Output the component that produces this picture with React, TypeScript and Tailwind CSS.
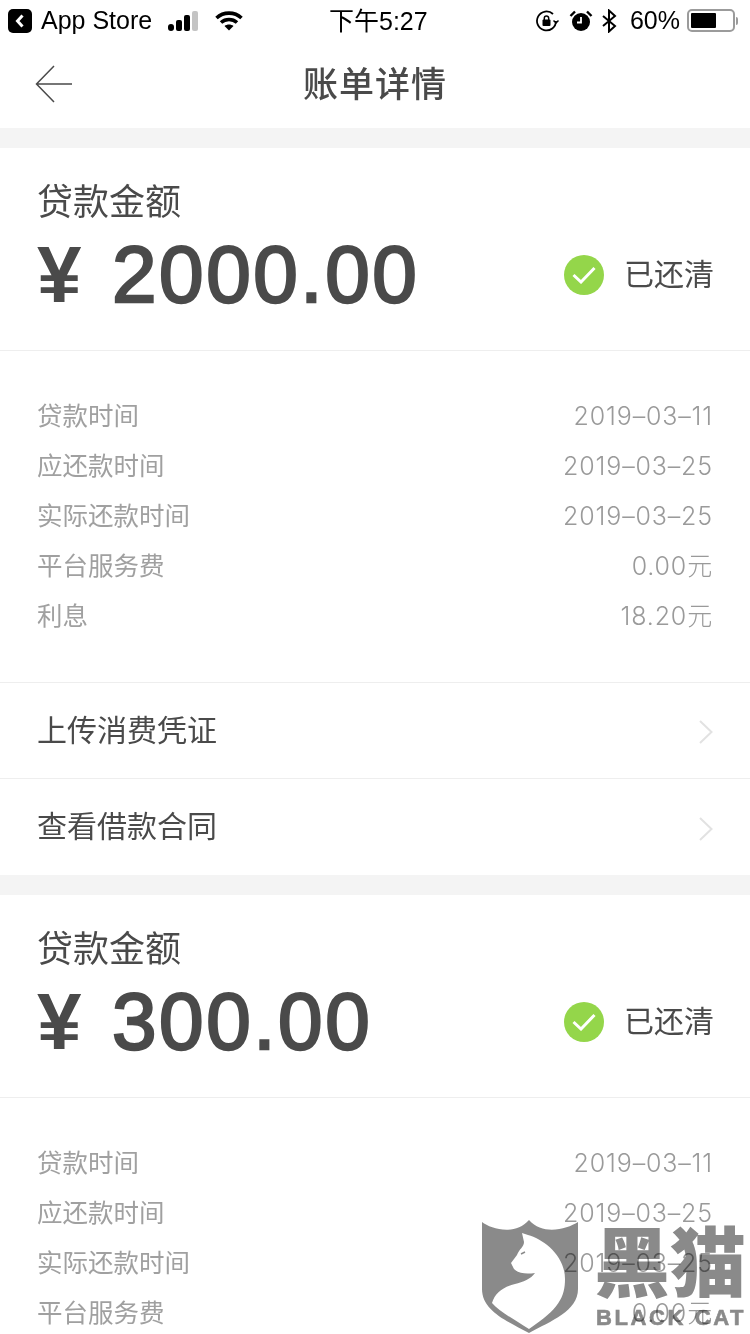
const fontStack = "font-['Liberation_Sans','Noto_Sans_CJK_SC',sans-serif]";

type Bill = {
  amount: string;
  rows: [string, string][];
};

const bills: Bill[] = [
  {
    amount: "2000.00",
    rows: [
      ["贷款时间", "2019–03–11"],
      ["应还款时间", "2019–03–25"],
      ["实际还款时间", "2019–03–25"],
      ["平台服务费", "0.00元"],
      ["利息", "18.20元"],
    ],
  },
  {
    amount: "300.00",
    rows: [
      ["贷款时间", "2019–03–11"],
      ["应还款时间", "2019–03–25"],
      ["实际还款时间", "2019–03–25"],
      ["平台服务费", "0.00元"],
    ],
  },
];

function StatusBar() {
  return (
    <div className="relative flex h-[40px] items-center justify-between pl-2 pr-[12px] pt-[1px] text-[25px] leading-none text-black">
      <div className="flex items-center">
        <div className="flex h-[24px] w-[24px] items-center justify-center rounded-[5px] bg-black">
          <svg viewBox="0 0 24 24" className="h-[24px] w-[24px]">
            <path d="M14.5 6.5 9.5 12l5 5.5" fill="none" stroke="#fff" strokeWidth="3" />
          </svg>
        </div>
        <span className="ml-[9px] text-[25px]">App Store</span>
        <div className="ml-[16px] flex items-end gap-[2px]">
          <div className="h-[7px] w-[6px] rounded-[3px] bg-black" />
          <div className="h-[11px] w-[6px] rounded-[2px] bg-black" />
          <div className="h-[16px] w-[6px] rounded-[2px] bg-black" />
          <div className="h-[20px] w-[6px] rounded-[2px] bg-[#c4c4c4]" />
        </div>
        <svg viewBox="0 0 28 20" className="ml-[17px] h-[20px] w-[28px]" fill="none" stroke="#000" strokeWidth="3.6">
          <path d="M1.5 7C8.5 0.5 19.5 0.5 26.5 7" />
          <path d="M6 11.5C10.5 7.5 17.5 7.5 22 11.5" />
          <path d="M14 19.5 9.5 15C12 13 16 13 18.5 15Z" fill="#000" stroke="none" />
        </svg>
      </div>
      <div className="absolute left-[329px] top-[8px] text-[25px] leading-[26px]">下午5:27</div>
      <div className="flex items-center">
        <svg viewBox="0 0 24 24" className="h-[24px] w-[24px]" fill="none" stroke="#000" strokeWidth="1.8">
          <path d="M21 12a9.5 9.5 0 1 1-3-7" />
          <path d="M23.5 11.5 21 14l-2.5-2.5" strokeWidth="1.5" />
          <rect x="7.5" y="10.5" width="8" height="6.5" rx="1" fill="#000" stroke="none" />
          <path d="M9.3 11V9.2a2.2 2.2 0 0 1 4.4 0V11" strokeWidth="1.5" />
        </svg>
        <svg viewBox="0 0 24 24" className="ml-[10px] h-[24px] w-[24px]">
          <circle cx="12" cy="13" r="9" fill="#000" />
          <path d="M12 8v5.5H8" fill="none" stroke="#fff" strokeWidth="1.8" />
          <path d="M1.5 7 6 2.5M22.5 7 18 2.5" stroke="#000" strokeWidth="2.4" />
        </svg>
        <svg viewBox="0 0 16 24" className="ml-[8px] h-[24px] w-[16px]" fill="none" stroke="#000" strokeWidth="2">
          <path d="M2 7l12 10-6 5.5V1.5L14 7 2 17" />
        </svg>
        <span className="ml-[13px] text-[25px]">60%</span>
        <div className="ml-[7px] flex h-[23px] w-[48px] items-center rounded-[5px] border-2 border-[#9b9b9b] pl-[2px]">
          <div className="h-[15px] w-[25px] rounded-[1px] bg-black" />
        </div>
        <div className="ml-[1px] h-[8px] w-[2px] rounded-r-[2px] bg-[#9b9b9b]" />
      </div>
    </div>
  );
}

function NavBar() {
  return (
    <div className="relative flex h-[88px] items-center justify-center">
      <svg viewBox="0 0 38 38" className="absolute left-[35px] top-[25px] h-[38px] w-[38px]" fill="none" stroke="#4a4a4a" strokeWidth="1.5">
        <path d="M19 1 1.5 19 19 37M1.5 19H37" />
      </svg>
      <h1 className="mt-[1px] text-[35px] font-medium leading-none tracking-[1px] text-[#4a4a4a]">账单详情</h1>
    </div>
  );
}

function Gap() {
  return <div className="h-[20px] bg-[#f4f4f4]" />;
}

function BillCard({ bill }: { bill: Bill }) {
  return (
    <section>
      <div className="flex h-[203px] flex-col border-b border-[#eeeeee] pl-[37px] pr-[36px] pt-[32px]">
        <div className="text-[36px] leading-[46px] text-[#4a4a4a]">贷款金额</div>
        <div className="mt-[6px] flex items-center justify-between">
          <div className="flex items-center text-[#4a4a4a]">
            <span className="w-[75px] text-[80px] font-bold leading-[86px]">¥</span>
            <span className="text-[80px] leading-[86px] tracking-[2.6px] [-webkit-text-stroke:2.4px_#4a4a4a]">{bill.amount}</span>
          </div>
          <div className="flex items-center">
            <div className="flex h-[40px] w-[40px] items-center justify-center rounded-full bg-[#94d64a]">
              <svg viewBox="0 0 24 18" className="h-[18px] w-[24px]" fill="none" stroke="#fff" strokeWidth="3">
                <path d="M1.5 9 9 16 22.5 2" />
              </svg>
            </div>
            <span className="ml-[20px] text-[30px] leading-none text-[#4a4a4a]">已还清</span>
          </div>
        </div>
      </div>
      <div className="border-b border-[#eeeeee] px-[37px] pb-[41px] pt-[40px]">
        {bill.rows.map(([label, value]) => (
          <div key={label} className="flex h-[50px] items-center justify-between pt-[1px] text-[25.5px] text-[#a0a0a0]">
            <span>{label}</span>
            <span className="font-['Inter','Noto_Sans_CJK_SC',sans-serif] text-[25px] font-light tracking-[0.85px] text-[#9a9a9a]">{value}</span>
          </div>
        ))}
      </div>
    </section>
  );
}

function LinkRow({ label, last }: { label: string; last?: boolean }) {
  return (
    <div className={`flex h-[96px] items-center justify-between pl-[37px] pr-[37px] ${last ? "" : "border-b border-[#eeeeee]"}`}>
      <span className="text-[30px] leading-none text-[#4a4a4a]">{label}</span>
      <svg viewBox="0 0 14 24" className="mt-[3px] h-[24px] w-[14px]" fill="none" stroke="#e2e2e2" strokeWidth="2">
        <path d="M1 1 12.5 12 1 23" />
      </svg>
    </div>
  );
}

function Watermark() {
  return (
    <div className="absolute left-[481px] top-[1219px] h-[115px] w-[269px] overflow-hidden mix-blend-multiply">
      <svg viewBox="0 0 98 115" className="absolute left-0 top-0 h-[115px] w-[98px]">
        <path d="M1 3C10 10 34 17 48 1 62 17 86 10 97 3V70C97 92 70 102 48 114 26 102 1 92 1 70Z" fill="#8a8a8a" />
        <path d="M41 14 47 16C62 20 84 36 84 60 84 78 78 90 48 110 32 100 18 92 11 84 14 74 22 68 34 65 42 63 50 60 54 54 46 55 38 55 33 50L30 44 36 36C38 30 43 28 43 23Z" fill="#fff" />
        <path d="M40 35 44 33" stroke="#8a8a8a" strokeWidth="1.5" />
      </svg>
      <div className="absolute left-[113px] top-[6px] whitespace-nowrap text-[76px] font-black leading-[80px] text-[#8a8a8a]">黑猫</div>
      <div className="absolute bottom-[5px] left-[115px] whitespace-nowrap font-['Liberation_Sans',sans-serif] text-[22px] font-bold leading-none tracking-[2.6px] text-[#8a8a8a] [-webkit-text-stroke:0.6px_#8a8a8a]">BLACK CAT</div>
    </div>
  );
}

export default function App() {
  return (
    <div className={`relative h-[1334px] w-[750px] overflow-hidden bg-white ${fontStack}`}>
      <StatusBar />
      <NavBar />
      <Gap />
      <BillCard bill={bills[0]} />
      <LinkRow label="上传消费凭证" />
      <LinkRow label="查看借款合同" last />
      <Gap />
      <BillCard bill={bills[1]} />
      <Watermark />
    </div>
  );
}
